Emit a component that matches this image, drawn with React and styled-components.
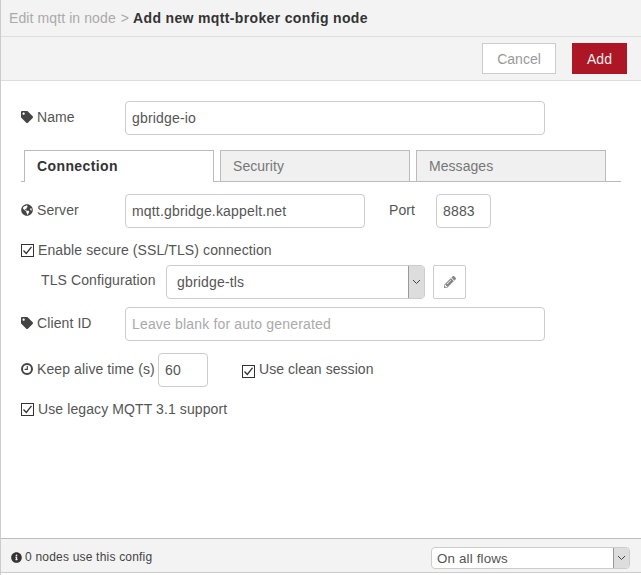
import React from 'react';
import styled, { createGlobalStyle } from 'styled-components';
import { FaTag, FaGlobeAmericas, FaInfoCircle, FaPencilAlt } from 'react-icons/fa';

const GlobalStyle = createGlobalStyle`
  html, body {
    margin: 0;
    padding: 0;
    background: #fff;
  }
  * {
    box-sizing: border-box;
  }
`;

const Tray = styled.div`
  width: 641px;
  height: 575px;
  display: flex;
  flex-direction: column;
  border-left: 1px solid #ccc;
  background: #fff;
  color: #555;
  font-family: "Liberation Sans", Arial, sans-serif;
  font-size: 14px;
  letter-spacing: 0.1px;
  overflow: hidden;
`;

const Breadcrumb = styled.div`
  height: 37px;
  display: flex;
  align-items: center;
  gap: 5px;
  padding-left: 8px;
  background: #f3f3f3;
  border-bottom: 1px solid #ddd;
  color: #aaa;
`;

const CurrentCrumb = styled.b`
  margin-left: -1px;
  color: #333;
  letter-spacing: 0.35px;
`;

const Toolbar = styled.div`
  height: 44px;
  display: flex;
  justify-content: flex-end;
  align-items: flex-start;
  gap: 16px;
  padding: 6px 14px 0 0;
  background: #f3f3f3;
  border-bottom: 1px solid #ddd;
`;

const ToolButton = styled.button`
  height: 31px;
  width: ${({ $primary }) => ($primary ? '55px' : '74px')};
  padding: 0;
  font: inherit;
  background: ${({ $primary }) => ($primary ? '#ad1625' : '#fff')};
  color: ${({ $primary }) => ($primary ? '#eee' : '#999')};
  border: 1px solid ${({ $primary }) => ($primary ? '#ad1625' : '#ccc')};
`;

const Form = styled.div`
  flex: 1;
  padding: 20px 0 0 20px;
`;

const Row = styled.div`
  display: flex;
  align-items: center;
  height: ${({ $height }) => $height || 34}px;
  margin-bottom: ${({ $gap }) => $gap ?? 12}px;
`;

const Label = styled.label`
  width: ${({ $width }) => $width}px;
  margin-left: ${({ $indent }) => $indent || 0}px;
  display: flex;
  align-items: center;
  gap: 4px;
  padding-bottom: ${({ $lift }) => $lift || 3}px;
  flex: none;

  svg {
    width: 12px;
    height: 12px;
    color: #444;
    flex: none;
  }
`;

const TextInput = styled.input`
  width: ${({ $width }) => $width}px;
  height: 34px;
  flex: none;
  padding: 0 6px;
  font: inherit;
  letter-spacing: 0.17px;
  color: #555;
  background: #fff;
  border: 1px solid #ccc;
  border-radius: 4px;
  outline: none;

  &::placeholder {
    color: #aaa;
    opacity: 1;
  }
`;

const TabBar = styled.div`
  width: 600px;
  height: 32px;
  display: flex;
  gap: 6px;
  padding-left: 3px;
  margin-bottom: 12px;
  border-bottom: 1px solid #bbb;
`;

const Tab = styled.div`
  width: 190px;
  height: ${({ $active }) => ($active ? 32 : 31)}px;
  display: flex;
  align-items: center;
  padding-left: 12px;
  padding-bottom: ${({ $active }) => ($active ? 2 : 0)}px;
  background: ${({ $active }) => ($active ? '#fff' : '#f0f0f0')};
  color: ${({ $active }) => ($active ? '#333' : '#777')};
  font-weight: ${({ $active }) => ($active ? 700 : 400)};
  letter-spacing: ${({ $active }) => ($active ? '0.4px' : '0.05px')};
  border: 1px solid #bbb;
  border-bottom: none;
`;

const CheckRow = styled.label`
  display: flex;
  align-items: center;
  gap: 4px;
  margin-left: ${({ $indent }) => $indent || 0}px;
  padding-bottom: ${({ $lift }) => $lift || 0}px;
  letter-spacing: ${({ $tight }) => ($tight ? '0.05px' : 'inherit')};
`;

const CheckBox = styled.span`
  width: 13px;
  height: 13px;
  flex: none;
  display: block;
  margin-top: ${({ $drop }) => $drop || 0}px;
  background: #fff;
  border: 1px solid #333;

  svg {
    display: block;
    width: 11px;
    height: 11px;
  }
`;

const SelectWrap = styled.div`
  position: relative;
  width: ${({ $width }) => $width}px;
  height: ${({ $height }) => $height}px;
  flex: none;
`;

const Select = styled.select`
  width: 100%;
  height: 100%;
  appearance: none;
  padding: 0 0 0 ${({ $pad }) => $pad}px;
  font-family: inherit;
  font-size: ${({ $size }) => $size}px;
  letter-spacing: 0.17px;
  color: #555;
  background: #fff;
  border: 1px solid #ccc;
  border-radius: 4px;
  outline: none;
`;

const SelectArrow = styled.span`
  position: absolute;
  top: 1px;
  right: 1px;
  bottom: 1px;
  width: 16px;
  display: flex;
  align-items: center;
  justify-content: center;
  background: #ddd;
  border-left: 1px solid #999;
  border-radius: 0 3px 3px 0;
  pointer-events: none;

  svg {
    width: 9px;
    height: 6px;
  }
`;

const EditButton = styled.button`
  width: 33px;
  height: 34px;
  margin-left: 8px;
  padding: 0;
  display: flex;
  align-items: center;
  justify-content: center;
  background: #fff;
  color: #888;
  border: 1px solid #ccc;
  border-radius: 2px;

  svg {
    width: 12px;
    height: 12px;
  }
`;

const Footer = styled.div`
  height: 35px;
  margin-bottom: 2px;
  display: flex;
  align-items: center;
  justify-content: space-between;
  padding: 5px 11px 0 10px;
  background: #f3f3f3;
  border-top: 1px solid #bbb;
  border-bottom: 1px solid #ccc;
`;

const FooterNote = styled.span`
  display: flex;
  align-items: center;
  gap: 3px;
  font-size: 12px;
  letter-spacing: 0.2px;
  color: #444;
  padding-bottom: 2px;

  svg {
    width: 11px;
    height: 11px;
    color: #333;
  }
`;

const Chevron = () => (
  <svg viewBox="0 0 9 6" fill="none" stroke="#444" strokeWidth="1">
    <path d="M1 1l3.5 3.5L8 1" />
  </svg>
);

const Tick = () => (
  <svg viewBox="0 0 11 11" fill="none" stroke="#333" strokeWidth="1.3">
    <path d="M1.5 5.5l2.8 3L9.5 1.8" />
  </svg>
);

const ClockIcon = () => (
  <svg viewBox="0 0 12 12" fill="none" stroke="currentColor">
    <circle cx="6" cy="6" r="5" strokeWidth="2" />
    <path d="M6.3 3v3.4H3.6" strokeWidth="1.2" />
  </svg>
);

const Check = ({ text, indent, drop, lift, tight }) => (
  <CheckRow $indent={indent} $lift={lift} $tight={tight}>
    <CheckBox $drop={drop}><Tick /></CheckBox>
    {text}
  </CheckRow>
);

const ArrowSelect = ({ value, width, height, pad, size }) => (
  <SelectWrap $width={width} $height={height}>
    <Select $pad={pad} $size={size} defaultValue={value}>
      <option>{value}</option>
    </Select>
    <SelectArrow><Chevron /></SelectArrow>
  </SelectWrap>
);

const App = () => (
  <Tray>
    <GlobalStyle />
    <Breadcrumb>
      <span>Edit mqtt in node</span>
      <span>&gt;</span>
      <CurrentCrumb>Add new mqtt-broker config node</CurrentCrumb>
    </Breadcrumb>
    <Toolbar>
      <ToolButton>Cancel</ToolButton>
      <ToolButton $primary>Add</ToolButton>
    </Toolbar>
    <Form>
      <Row $gap={15}>
        <Label $width={104}><FaTag />Name</Label>
        <TextInput $width={420} defaultValue="gbridge-io" />
      </Row>
      <TabBar>
        <Tab $active>Connection</Tab>
        <Tab>Security</Tab>
        <Tab>Messages</Tab>
      </TabBar>
      <Row>
        <Label $width={104}><FaGlobeAmericas />Server</Label>
        <TextInput $width={240} defaultValue="mqtt.gbridge.kappelt.net" />
        <Label $width={47} $indent={24}>Port</Label>
        <TextInput $width={55} defaultValue="8883" />
      </Row>
      <Row $height={20} $gap={5}>
        <Check text="Enable secure (SSL/TLS) connection" />
      </Row>
      <Row $gap={8}>
        <Label $width={125} $indent={20} $lift={5}>TLS Configuration</Label>
        <ArrowSelect value="gbridge-tls" width={259} height={34} pad={10} size={14} />
        <EditButton><FaPencilAlt /></EditButton>
      </Row>
      <Row>
        <Label $width={104}><FaTag />Client ID</Label>
        <TextInput $width={420} placeholder="Leave blank for auto generated" />
      </Row>
      <Row>
        <Label $width={137}><ClockIcon />Keep alive time (s)</Label>
        <TextInput $width={50} defaultValue="60" />
        <Check text="Use clean session" indent={34} drop={4} lift={2} tight />
      </Row>
      <Row $height={20}>
        <Check text="Use legacy MQTT 3.1 support" />
      </Row>
    </Form>
    <Footer>
      <FooterNote><FaInfoCircle />0 nodes use this config</FooterNote>
      <ArrowSelect value="On all flows" width={199} height={22} pad={5} size={13.33} />
    </Footer>
  </Tray>
);

export default App;
